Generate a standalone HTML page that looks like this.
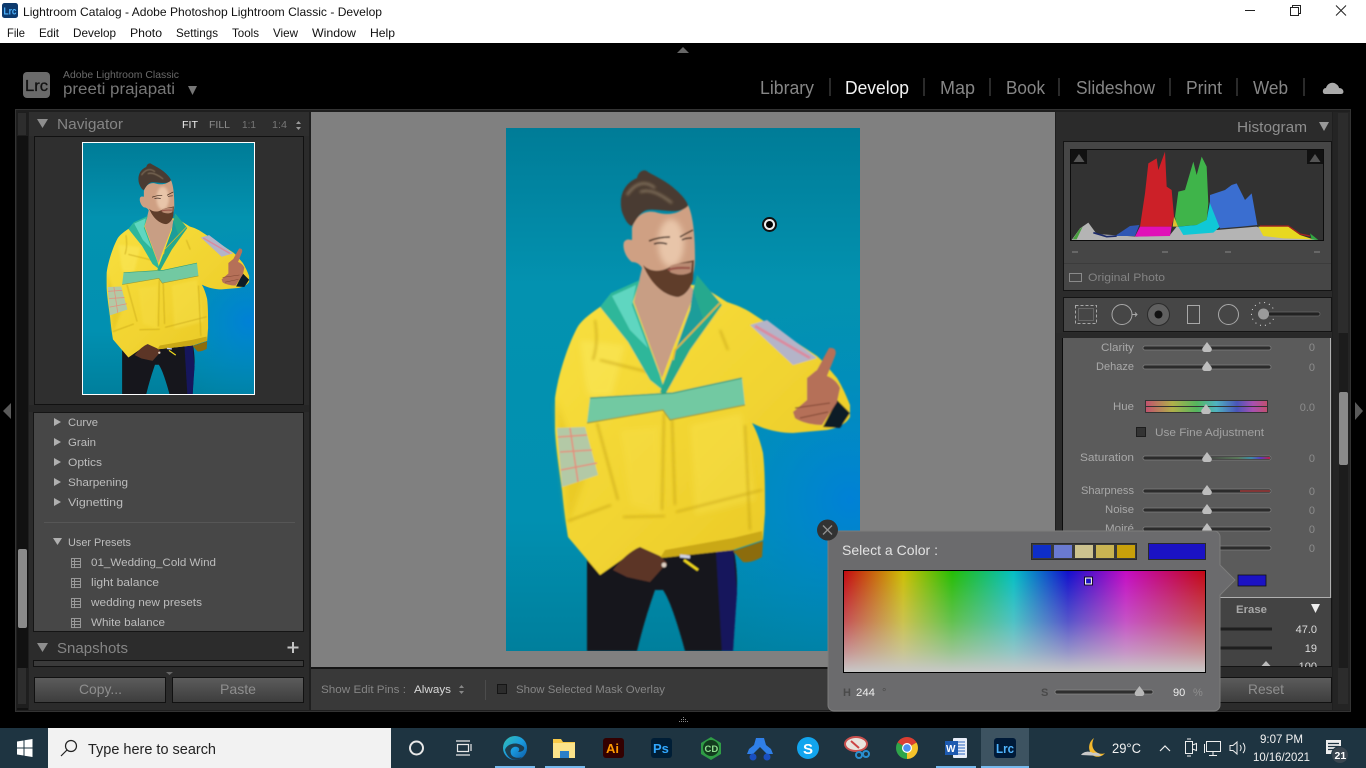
<!DOCTYPE html>
<html lang="en"><head><meta charset="utf-8"><title>Lightroom Catalog - Adobe Photoshop Lightroom Classic - Develop</title>
<style>
html,body{margin:0;padding:0;background:#000;width:1366px;height:768px;overflow:hidden}
svg{display:block;position:absolute;left:0;top:0}
text{font-family:"Liberation Sans",sans-serif;white-space:pre}
</style></head><body>
<svg width="1366" height="768" viewBox="0 0 1366 768" xmlns="http://www.w3.org/2000/svg">
<defs>
<linearGradient id="bgA" x1="0" y1="0" x2="0" y2="1"><stop offset="0" stop-color="#007c97"/><stop offset=".3" stop-color="#0392b0"/><stop offset=".75" stop-color="#0190b1"/><stop offset="1" stop-color="#007f9c"/></linearGradient>
<radialGradient id="bgB" gradientUnits="userSpaceOnUse" cx="850" cy="500" r="210"><stop offset="0" stop-color="#0080d8" stop-opacity=".95"/><stop offset="1" stop-color="#0090c0" stop-opacity="0"/></radialGradient>
<linearGradient id="btn" x1="0" y1="0" x2="0" y2="1"><stop offset="0" stop-color="#5c5c5c"/><stop offset="1" stop-color="#3d3d3d"/></linearGradient>
<linearGradient id="spec" x1="0" y1="0" x2="1" y2="0"><stop offset="0" stop-color="#c40812"/><stop offset=".165" stop-color="#cdbf05"/><stop offset=".3" stop-color="#25bd05"/><stop offset=".47" stop-color="#04bfc4"/><stop offset=".62" stop-color="#1210cc"/><stop offset=".78" stop-color="#c40cc4"/><stop offset="1" stop-color="#c40812"/></linearGradient>
<linearGradient id="specV" x1="0" y1="0" x2="0" y2="1"><stop offset="0" stop-color="#c8c8c8" stop-opacity="0"/><stop offset=".5" stop-color="#c8c8c8" stop-opacity=".38"/><stop offset=".8" stop-color="#c8c8c8" stop-opacity=".72"/><stop offset="1" stop-color="#c8c8c8"/></linearGradient>
<linearGradient id="hue" x1="0" y1="0" x2="1" y2="0"><stop offset="0" stop-color="#c2506e"/><stop offset=".22" stop-color="#b0b04a"/><stop offset=".42" stop-color="#55b55e"/><stop offset=".58" stop-color="#4fb4c0"/><stop offset=".75" stop-color="#4a55b8"/><stop offset=".88" stop-color="#a850b0"/><stop offset="1" stop-color="#c2506e"/></linearGradient>
<linearGradient id="sat" x1="0" y1="0" x2="1" y2="0"><stop offset="0" stop-color="#444"/><stop offset=".5" stop-color="#5a7a5a"/><stop offset=".7" stop-color="#3b8ca8"/><stop offset=".85" stop-color="#5a3ac0"/><stop offset="1" stop-color="#c02040"/></linearGradient>
<linearGradient id="jack" x1="0" y1="0" x2="1" y2="1"><stop offset="0" stop-color="#f8e040"/><stop offset=".55" stop-color="#f1d330"/><stop offset="1" stop-color="#e6c522"/></linearGradient>
<linearGradient id="edge" x1="0" y1="0" x2="1" y2="1"><stop offset="0" stop-color="#35c1b0"/><stop offset=".5" stop-color="#1a9be0"/><stop offset="1" stop-color="#0c59a4"/></linearGradient>
<filter id="soft" x="-5%" y="-5%" width="110%" height="110%"><feGaussianBlur stdDeviation=".7"/></filter>
<filter id="soft3" x="-20%" y="-20%" width="140%" height="140%"><feGaussianBlur stdDeviation="3"/></filter>
<filter id="soft1" x="-20%" y="-20%" width="140%" height="140%"><feGaussianBlur stdDeviation="1.3"/></filter>
<clipPath id="imgClip"><rect x="506" y="128" width="354" height="523"/></clipPath>
<clipPath id="faceClip"><path d="M632 228 C636 215 645 210 655 212 C668 216 680 214 688 205 C693 215 695 235 695 258 C695 275 690 290 678 296 C665 296 650 285 642 268 C640 264 636 262 632 262 C626 258 622 248 624 242 C627 238 630 240 632 240Z"/></clipPath>
<g id="person" clip-path="url(#imgClip)">
<rect x="506" y="128" width="354" height="523" fill="url(#bgA)"/>
<rect x="506" y="128" width="354" height="523" fill="url(#bgB)"/>
<g filter="url(#soft)">
<path d="M587 560 L733 545 C738 570 738 590 735 610 L733 651 L685 651 C678 625 670 600 663 590 L655 590 C648 610 642 630 637 651 L587 651Z" fill="#15171c"/>
<path d="M716 550 L733 548 L737 593 L733 651 L722 651Z" fill="#12145c"/>
<path d="M733 551 L763 541 L762 557 C755 561 748 563 743 562Z" fill="#8c6c10"/>
<!-- jacket -->
<path d="M600 307 C588 315 580 322 577 328 C568 345 558 375 555 398 L555 430 C556 450 560 475 562 490 C564 510 566 525 568 537 L600 575 L640 547 L660 558 L733 550 L763 540 L765 513 C765 490 765 470 763 453 C760 440 756 430 752 423 C765 430 780 433 793 433 L827 430 C838 428 846 424 850 417 L850 405 C846 395 842 386 837 378 C830 370 824 362 817 356 L750 312 C740 306 733 304 727 302 L700 285 L640 285Z" fill="url(#jack)"/>
<path d="M660 558 L733 550 L763 540 L762 531 L733 538 L665 550Z" fill="#caa818"/>
<path d="M556 400 C558 430 562 470 568 525 L585 480Z" fill="#e6c624" opacity=".7" filter="url(#soft3)"/>
<path d="M580 340 C585 380 585 390 590 396 L612 396 L625 345Z" fill="#fbe960" opacity=".5" filter="url(#soft3)"/>
<path d="M690 425 L742 412 L755 500 L695 515Z" fill="#fae654" opacity=".35" filter="url(#soft3)"/>
<path d="M620 430 L660 425 L660 515 L630 505Z" fill="#f8e04c" opacity=".35" filter="url(#soft3)"/>
<g filter="url(#soft1)" fill="none" stroke="#c4a316" stroke-width="1.600" opacity=".85">
<path d="M568 521 L611 505 M623 517 L665 516 M676 512 L762 490 M664 413 L662 510 M672 418 L675 505 M597 423 L618 500 M745 425 L750 530 M600 360 L660 375"/>
<path d="M595 320 C598 340 596 350 593 360 M720 330 L728 350"/>
</g>
<!-- neck chest -->
<path d="M634 302 L642 268 L690 285 L695 292 L673 348 L662 378Z" fill="#c89e84"/>
<!-- collars -->
<path d="M600 307 L611 293 L640 280 L633 302 L660 375 L665 392 L650 380 L628 342Z" fill="#2fb79a"/>
<path d="M612 296 L636 285 L632 305 L648 348 L630 330Z" fill="#5ed6c0"/>
<path d="M697 275 L722 305 L690 350 L665 395 L660 392 L672 360 L690 310 L693 290Z" fill="#27a98e"/>
<path d="M693 290 L703 318 L675 352 L690 310Z" fill="#1f9d9a"/>
<path d="M720 303 L675 350 L673 360" stroke="#e8b820" stroke-width="1.500" fill="none"/>
<!-- head -->
<path d="M632 228 C636 215 645 210 655 212 C668 216 680 214 688 205 C693 215 695 235 695 258 C695 275 690 290 678 296 C665 296 650 285 642 268 C640 264 636 262 632 262 C626 258 622 248 624 242 C627 238 630 240 632 240Z" fill="#cfa083"/>
<g clip-path="url(#faceClip)"><ellipse cx="671" cy="243" rx="13" ry="24" fill="#e8c5a9" filter="url(#soft3)"/></g>
<path d="M643 265 C650 272 660 272 668 268 C678 262 688 262 694 260 L693 280 C690 290 684 296 678 297 C665 296 651 285 643 265Z" fill="#5f3e2a"/>
<path d="M670 266 C678 262 686 264 692 262 L691 272 C684 276 676 275 670 272Z" fill="#b98a72"/>
<path d="M668 270 C676 267 684 268 690 268" stroke="#9a5448" stroke-width="2.200" fill="none"/>
<path d="M649 241 C656 238 664 237 670 237 M680 237 C685 234 689 232 693 230" stroke="#3f2a1c" stroke-width="1.500" fill="none"/>
<path d="M654 244 C659 242 664 243 667 244 M682 240 C685 238 689 238 692 238" stroke="#3c2a24" stroke-width="1.500" fill="none"/>
<path d="M622 212 C618 195 625 183 637 178 C638 172 644 168 648 172 C655 176 668 182 676 190 C683 196 688 203 688 206 C678 216 660 208 647 210 C640 212 636 220 632 226 C628 225 625 220 622 212Z" fill="#4a3b30"/>
<path d="M627 195 C635 183 645 180 655 188 M640 192 C650 188 662 195 672 203" stroke="#84735f" stroke-width="2.200" fill="none" filter="url(#soft1)"/>
<!-- pocket band -->
<path d="M590 398 L673 393 L742 378 L745 405 L670 420 L663 410 L587 423Z" fill="#72c9a2"/>
<path d="M590 398 L673 393 L742 378" stroke="#2f9c78" stroke-width="1.200" fill="none"/>
<path d="M587 423 L663 410 L670 420 L745 405" stroke="#9c9b34" stroke-width="1.200" fill="none"/>
<!-- patches -->
<path d="M557 428 L585 427 L598 475 L562 487Z" fill="#b3c9a6"/>
<path d="M558 437 L587 435 M560 452 L592 450 M561 470 L597 463 M570 428 L578 482" stroke="#e2907e" stroke-width="1.600"/>
<path d="M750 325 L767 320 L817 358 L793 365Z" fill="#b4b4c8"/>
<path d="M755 326 L810 358" stroke="#d98ca0" stroke-width="3"/>
<!-- hands -->
<path d="M837 400 L850 413 L840 428 L823 427Z" fill="#0d1a26"/>
<path d="M829 348 C835 347 837 351 835 356 L827 376 C833 378 838 383 840 388 L837 402 L822 425 C812 425 800 422 795 418 L793 412 L807 400 L807 378 C811 375 814 372 817 370Z" fill="#b57058"/>
<path d="M795 408 L830 403 M800 418 L828 412" stroke="#7d4430" stroke-width="1"/>
<path d="M613 570 C622 558 632 550 640 547 L660 556 L667 563 L650 582 L627 577Z" fill="#5b3526"/>
<path d="M684 560 L698 570" stroke="#f2d91e" stroke-width="2.500"/>
<path d="M680 556 L690 557" stroke="#cfd3e6" stroke-width="3"/>
<circle cx="664" cy="565" r="2.400" fill="#e0d0c4"/>
</g>
</g>
</defs>

<!-- window chrome -->
<rect x="0" y="0" width="1366" height="43" fill="#fff"/>
<rect x="2" y="3" width="16" height="15" rx="2.500" fill="#0d3a6e"/>
<text x="3.500" y="14.500" font-size="10" font-weight="700" fill="#4fb5ff" textLength="13" lengthAdjust="spacingAndGlyphs">Lrc</text>
<text x="23" y="16" font-size="12" fill="#111" textLength="359" lengthAdjust="spacingAndGlyphs">Lightroom Catalog - Adobe Photoshop Lightroom Classic - Develop</text>
<g font-size="12" fill="#111">
<text x="7" y="37" textLength="18" lengthAdjust="spacingAndGlyphs">File</text>
<text x="39" y="37" textLength="20" lengthAdjust="spacingAndGlyphs">Edit</text>
<text x="73" y="37" textLength="43" lengthAdjust="spacingAndGlyphs">Develop</text>
<text x="130" y="37" textLength="32" lengthAdjust="spacingAndGlyphs">Photo</text>
<text x="176" y="37" textLength="42" lengthAdjust="spacingAndGlyphs">Settings</text>
<text x="232" y="37" textLength="27" lengthAdjust="spacingAndGlyphs">Tools</text>
<text x="273" y="37" textLength="25" lengthAdjust="spacingAndGlyphs">View</text>
<text x="312" y="37" textLength="44" lengthAdjust="spacingAndGlyphs">Window</text>
<text x="370" y="37" textLength="25" lengthAdjust="spacingAndGlyphs">Help</text>
</g>
<path d="M1245 10.500H1255" stroke="#222" stroke-width="1"/>
<path d="M1290.500 7.500h8v8h-8z M1292.500 7.500v-2h8v8h-2" fill="none" stroke="#222"/>
<path d="M1336 5.500l10 10M1346 5.500l-10 10" stroke="#222" stroke-width="1"/>

<!-- top bar -->
<path d="M677 53L683 47L689 53Z" fill="#666"/>
<rect x="23" y="72" width="27" height="26" rx="4" fill="#6a6a6a"/>
<text x="25" y="91" font-size="16" fill="#111" stroke="#111" stroke-width=".3" textLength="23" lengthAdjust="spacingAndGlyphs">Lrc</text>
<text x="63" y="78" font-size="10.500" fill="#6a6a6a" textLength="116" lengthAdjust="spacingAndGlyphs">Adobe Lightroom Classic</text>
<text x="63" y="94" font-size="15.500" fill="#777" textLength="112" lengthAdjust="spacingAndGlyphs">preeti prajapati</text>
<path d="M188 86h9l-4.500 9z" fill="#767676"/>
<g font-size="18" fill="#868686">
<text x="760" y="94" textLength="54" lengthAdjust="spacingAndGlyphs">Library</text>
<text x="845" y="94" fill="#f4f4f4" textLength="64" lengthAdjust="spacingAndGlyphs">Develop</text>
<text x="940" y="94" textLength="35" lengthAdjust="spacingAndGlyphs">Map</text>
<text x="1006" y="94" textLength="39" lengthAdjust="spacingAndGlyphs">Book</text>
<text x="1076" y="94" textLength="79" lengthAdjust="spacingAndGlyphs">Slideshow</text>
<text x="1186" y="94" textLength="36" lengthAdjust="spacingAndGlyphs">Print</text>
<text x="1253" y="94" textLength="35" lengthAdjust="spacingAndGlyphs">Web</text>
</g>
<path d="M830 78v18M924 78v18M990 78v18M1059 78v18M1170 78v18M1237 78v18M1304 78v18" stroke="#555" stroke-width="1"/>
<path d="M1325 94c-3 0-3-6 1-6 1-4 6-7 10-4 2 1 3 3 3 4 5 0 6 6 2 6z" fill="#aaa"/>

<!-- frame -->
<rect x="15.500" y="109.500" width="1335" height="602" fill="#1f1f1f" stroke="#333"/>

<!-- left strip & panel -->
<rect x="17" y="112" width="11" height="598" fill="#111"/>
<rect x="17" y="112" width="11" height="24" fill="#1e1e1e"/><rect x="17" y="668" width="11" height="40" fill="#1e1e1e"/>
<path d="M19 113v22M21 113v22M23 113v22M25 113v22M19 668v36M21 668v36M23 668v36M25 668v36" stroke="#3c3c3c" stroke-width="1"/>
<rect x="18" y="549" width="9" height="79" rx="2" fill="#8a8a8a"/>
<path d="M3 411l8-8v16z" fill="#5a5a5a"/>
<rect x="29" y="112" width="280" height="598" fill="#2b2b2b"/>
<!-- navigator -->
<rect x="29" y="112" width="280" height="24" fill="#2e2e2e"/>
<path d="M37 119h11l-5.500 9z" fill="#8e8e8e"/>
<text x="57" y="129" font-size="15" fill="#858585" textLength="66" lengthAdjust="spacingAndGlyphs">Navigator</text>
<g font-size="10">
<text x="182" y="128" fill="#eee" textLength="16" lengthAdjust="spacingAndGlyphs">FIT</text>
<text x="209" y="128" fill="#8c8c8c" textLength="21" lengthAdjust="spacingAndGlyphs">FILL</text>
<text x="242" y="128" fill="#777" textLength="14" lengthAdjust="spacingAndGlyphs">1:1</text>
<text x="272" y="128" fill="#777" textLength="15" lengthAdjust="spacingAndGlyphs">1:4</text>
</g>
<path d="M296 124l2.500-3 2.500 3zM296 127l2.500 3 2.500-3z" fill="#999"/>
<rect x="34.500" y="136.500" width="269" height="268" fill="#2f2f2f" stroke="#111"/>
<rect x="82.500" y="142.500" width="172" height="252" fill="none" stroke="#fff"/>
<use href="#person" transform="translate(83 143) scale(.483 .48) translate(-506 -128)"/>
<rect x="29" y="405" width="280" height="7" fill="#262626"/>
<!-- presets -->
<rect x="33.500" y="412.500" width="270" height="219" fill="#474747" stroke="#151515"/>
<g fill="#b0b0b0"><path d="M54 418v8l7-4zM54 438v8l7-4zM54 458v8l7-4zM54 478v8l7-4zM54 498v8l7-4z"/><path d="M53 538h9l-4.500 7z"/></g>
<g font-size="11" fill="#bdbdbd">
<text x="68" y="426" textLength="30" lengthAdjust="spacingAndGlyphs">Curve</text>
<text x="68" y="446" textLength="28" lengthAdjust="spacingAndGlyphs">Grain</text>
<text x="68" y="466" textLength="34" lengthAdjust="spacingAndGlyphs">Optics</text>
<text x="68" y="486" textLength="60" lengthAdjust="spacingAndGlyphs">Sharpening</text>
<text x="68" y="506" textLength="55" lengthAdjust="spacingAndGlyphs">Vignetting</text>
<text x="68" y="546" textLength="63" lengthAdjust="spacingAndGlyphs">User Presets</text>
<text x="91" y="566" textLength="125" lengthAdjust="spacingAndGlyphs">01_Wedding_Cold Wind</text>
<text x="91" y="586" textLength="68" lengthAdjust="spacingAndGlyphs">light balance</text>
<text x="91" y="606" textLength="111" lengthAdjust="spacingAndGlyphs">wedding new presets</text>
<text x="91" y="626" textLength="74" lengthAdjust="spacingAndGlyphs">White balance</text>
</g>
<path d="M44 522.500H295" stroke="#565656"/>
<g fill="none" stroke="#999" stroke-width="1">
<path d="M71.500 558.500h9v9h-9zM71.500 561.500h9M71.500 564.500h9M74.500 558.500v9"/>
<path d="M71.500 578.500h9v9h-9zM71.500 581.500h9M71.500 584.500h9M74.500 578.500v9"/>
<path d="M71.500 598.500h9v9h-9zM71.500 601.500h9M71.500 604.500h9M74.500 598.500v9"/>
<path d="M71.500 618.500h9v9h-9zM71.500 621.500h9M71.500 624.500h9M74.500 618.500v9"/>
</g>
<!-- snapshots -->
<rect x="30" y="632" width="279" height="28" fill="#2c2c2c"/>
<path d="M37 643h11l-5.500 9z" fill="#8e8e8e"/>
<text x="57" y="653" font-size="15" fill="#858585" textLength="71" lengthAdjust="spacingAndGlyphs">Snapshots</text>
<path d="M293 642v11M287.500 647.500h11" stroke="#c4c4c4" stroke-width="2"/>
<rect x="33.500" y="660.500" width="270" height="6" fill="#3a3a3a" stroke="#111"/>
<path d="M166 672h7l-3.500 3z" fill="#666"/>
<rect x="34.500" y="677.500" width="131" height="25" fill="url(#btn)" stroke="#111"/>
<rect x="172.500" y="677.500" width="131" height="25" fill="url(#btn)" stroke="#111"/>
<text x="79" y="694" font-size="14" fill="#8e8e8e" textLength="43" lengthAdjust="spacingAndGlyphs">Copy...</text>
<text x="220" y="694" font-size="14" fill="#8e8e8e" textLength="36" lengthAdjust="spacingAndGlyphs">Paste</text>

<!-- center -->
<rect x="311" y="112" width="744" height="555" fill="#808080"/>
<use href="#person"/>
<circle cx="769.500" cy="224.500" r="7.500" fill="#111"/>
<circle cx="769.500" cy="224.500" r="5.500" fill="#eee"/>
<circle cx="769.500" cy="224.500" r="3.500" fill="#000"/>
<rect x="311" y="667" width="744" height="2" fill="#151515"/>
<rect x="311" y="669" width="744" height="41" fill="#393939"/>
<text x="321" y="693" font-size="11" fill="#858585" textLength="85" lengthAdjust="spacingAndGlyphs">Show Edit Pins :</text>
<text x="414" y="693" font-size="11" fill="#d8d8d8" textLength="37" lengthAdjust="spacingAndGlyphs">Always</text>
<path d="M459 688l2.500-3 2.500 3zM459 691l2.500 3 2.500-3z" fill="#888"/>
<path d="M485.500 680v20" stroke="#4c4c4c"/>
<rect x="497.500" y="684.500" width="9" height="9" fill="#2c2c2c" stroke="#151515"/>
<text x="516" y="693" font-size="11" fill="#858585" textLength="149" lengthAdjust="spacingAndGlyphs">Show Selected Mask Overlay</text>

<!-- right panel -->
<rect x="1056" y="112" width="276" height="598" fill="#2b2b2b"/>
<text x="1237" y="132" font-size="15" fill="#8e8e8e" textLength="70" lengthAdjust="spacingAndGlyphs">Histogram</text>
<path d="M1319 122h10l-5 9z" fill="#999"/>
<rect x="1063.500" y="141.500" width="268" height="149" fill="#464646" stroke="#141414"/>
<rect x="1070.500" y="149.500" width="253" height="91" fill="#323232" stroke="#0c0c0c"/>
<svg x="1050" y="110" width="316" height="240" viewBox="0 0 948 720">
<path d="M65 390L90 355L115 338L140 372L260 380L360 375L380 350L500 360L620 350L700 380L805 390Z" fill="#b4b4b4"/>
<path d="M195 378L240 348L268 345L255 378Z" fill="#2f57b4"/>
<path d="M130 368L170 380L200 378" stroke="#1c2a6a" stroke-width="5" fill="none"/>
<path d="M270 350L285 250L295 160L320 145L325 180L345 125L350 230L365 240L372 320L365 350Z" fill="#cc2028"/>
<path d="M255 380L270 350L365 350L360 378Z" fill="#e010b8"/>
<path d="M375 320L385 245L405 240L430 155L440 195L455 140L470 170L475 280L470 335L440 345L380 350Z" fill="#3fb44a"/>
<path d="M385 350L440 345L470 330L480 275L510 350L490 368L400 375Z" fill="#10c8d6"/>
<path d="M480 255L525 240L545 225L560 220L585 270L605 250L622 345L575 350L510 355L480 280Z" fill="#3a6ed0"/>
<path d="M372 320L384 350L368 350Z" fill="#e0c030"/>
<path d="M625 350L715 350L750 375L790 388L700 385L640 378Z" fill="#e8d820"/>
<path d="M630 348L715 348L750 372L780 378" stroke="#a82020" stroke-width="4" fill="none"/>
<path d="M780 370L805 390L785 388Z" fill="#30a840"/>
<path d="M68 388L88 358L98 350L80 388Z" fill="#4aa040"/>
</svg>
<rect x="1071" y="150" width="16" height="14" fill="#111"/><path d="M1073.500 162l5.500-8 5.500 8z" fill="#555"/>
<rect x="1307" y="150" width="16" height="14" fill="#111"/><path d="M1309.500 162l5.500-8 5.500 8z" fill="#555"/>
<path d="M1072 252h6M1162 252h6M1225 252h6M1314 252h6" stroke="#888"/>
<path d="M1064 263.500h267" stroke="#3c3c3c"/>
<rect x="1069.500" y="273.500" width="12" height="8" fill="none" stroke="#8a8a8a"/>
<text x="1088" y="281" font-size="11" fill="#838383" textLength="77" lengthAdjust="spacingAndGlyphs">Original Photo</text>
<rect x="1063.500" y="297.500" width="268" height="34" fill="#464646" stroke="#141414"/>
<g fill="none" stroke="#a8a8a8">
<rect x="1075.500" y="305.500" width="21" height="18" stroke-dasharray="3 2"/>
<rect x="1078.500" y="308.500" width="15" height="12" stroke="#888" stroke-dasharray="1 1"/>
<circle cx="1122" cy="314.500" r="10"/><path d="M1132 314.500h5M1135 312.500l2 2-2 2"/>
<rect x="1187.500" y="305.500" width="12" height="18"/>
<circle cx="1228.500" cy="314.500" r="10"/>
<circle cx="1263" cy="314" r="11.500" stroke-dasharray="1 4" stroke="#ddd"/>
</g>
<circle cx="1158.500" cy="314.500" r="11" fill="#606060" stroke="#2b2b2b"/><circle cx="1158.500" cy="314.500" r="4" fill="#111"/>
<rect x="1268" y="312" width="52" height="4" rx="2" fill="#222" stroke="#666" stroke-width=".8"/>
<circle cx="1263.500" cy="314" r="5.500" fill="#9a9a9a"/>

<rect x="1056" y="333" width="276" height="7" fill="#292929"/>
<rect x="1062" y="338" width="269" height="259" fill="#5b5b5b"/>
<path d="M1062.500 338v260" stroke="#0c0c0c"/>
<path d="M1330.500 338v260M1063 597.500h268" stroke="#b0b0b0"/>

<g font-size="11" fill="#a8a8a8" text-anchor="end">
<text x="1134" y="351" textLength="33" lengthAdjust="spacingAndGlyphs">Clarity</text>
<text x="1134" y="370" textLength="38" lengthAdjust="spacingAndGlyphs">Dehaze</text>
<text x="1134" y="410" textLength="21" lengthAdjust="spacingAndGlyphs">Hue</text>
<text x="1134" y="461" textLength="54" lengthAdjust="spacingAndGlyphs">Saturation</text>
<text x="1134" y="494" textLength="53" lengthAdjust="spacingAndGlyphs">Sharpness</text>
<text x="1134" y="513" textLength="29" lengthAdjust="spacingAndGlyphs">Noise</text>
<text x="1134" y="532" textLength="29" lengthAdjust="spacingAndGlyphs">Moiré</text>
</g>
<g font-size="11" fill="#8c8c8c" text-anchor="end">
<text x="1315" y="351">0</text><text x="1315" y="371">0</text><text x="1315" y="411">0.0</text><text x="1315" y="462">0</text><text x="1315" y="495">0</text><text x="1315" y="514">0</text><text x="1315" y="533">0</text><text x="1315" y="552">0</text>
</g>
<g fill="#2b2b2b" stroke="#808080" stroke-width=".8">
<rect x="1143" y="346" width="128" height="4" rx="2"/>
<rect x="1143" y="365" width="128" height="4" rx="2"/>
<rect x="1143" y="456" width="128" height="4" rx="2"/>
<rect x="1143" y="489" width="128" height="4" rx="2"/>
<rect x="1143" y="508" width="128" height="4" rx="2"/>
<rect x="1143" y="527" width="128" height="4" rx="2"/>
<rect x="1143" y="546" width="128" height="4" rx="2"/>
</g>
<rect x="1207" y="457" width="63" height="2" fill="url(#sat)"/>
<path d="M1240 491h30" stroke="#a03a3a" stroke-width="1.500"/>
<rect x="1145.500" y="400.500" width="122" height="12" fill="url(#hue)" stroke="#333"/>
<path d="M1146 406.500h121" stroke="#333"/>
<g fill="#bdbdbd">
<path d="M1207 342l4.500 6c1 2-.5 4-2 4h-5c-1.500 0-3-2-2-4z"/>
<path d="M1207 361l4.500 6c1 2-.5 4-2 4h-5c-1.500 0-3-2-2-4z"/>
<path d="M1206 404l4.500 6c1 2-.5 4-2 4h-5c-1.500 0-3-2-2-4z"/>
<path d="M1207 452l4.500 6c1 2-.5 4-2 4h-5c-1.500 0-3-2-2-4z"/>
<path d="M1207 485l4.500 6c1 2-.5 4-2 4h-5c-1.500 0-3-2-2-4z"/>
<path d="M1207 504l4.500 6c1 2-.5 4-2 4h-5c-1.500 0-3-2-2-4z"/>
<path d="M1207 523l4.500 6c1 2-.5 4-2 4h-5c-1.500 0-3-2-2-4z"/>
</g>
<rect x="1136.500" y="427.500" width="9" height="9" fill="#333" stroke="#1d1d1d"/>
<text x="1155" y="436" font-size="11" fill="#a2a2a2" textLength="109" lengthAdjust="spacingAndGlyphs">Use Fine Adjustment</text>

<rect x="1062" y="598" width="269" height="68" fill="#434343"/>
<path d="M1062.500 598v68M1331.500 598v68M1062 666.500h270" stroke="#141414"/>
<text x="1236" y="613" font-size="11" font-weight="700" fill="#a8a8a8" textLength="31" lengthAdjust="spacingAndGlyphs">Erase</text>
<path d="M1311 604h9l-4.500 9z" fill="#eee"/>
<path d="M1150 629h122M1150 648h122" stroke="#1e1e1e" stroke-width="3"/>
<text x="1317" y="633" font-size="11" fill="#dcdcdc" text-anchor="end">47.0</text>
<text x="1317" y="652" font-size="11" fill="#dcdcdc" text-anchor="end">19</text>
<path d="M1266 661l4.500 5h-9z" fill="#bbb"/>
<text x="1317" y="670" font-size="11" fill="#dcdcdc" text-anchor="end">100</text>
<rect x="1056" y="667" width="276" height="43" fill="#2b2b2b"/>
<rect x="1200.500" y="677.500" width="131" height="25" fill="url(#btn)" stroke="#111"/>
<text x="1248" y="694" font-size="14" fill="#8e8e8e" textLength="36" lengthAdjust="spacingAndGlyphs">Reset</text>

<!-- right strip -->
<rect x="1333" y="112" width="17" height="598" fill="#242424"/>
<path d="M1339 113v220M1341 113v220M1343 113v220M1345 113v220M1347 113v220M1339 668v36M1341 668v36M1343 668v36M1345 668v36M1347 668v36" stroke="#333"/>
<rect x="1339" y="333" width="9" height="335" fill="#1c1c1c"/>
<rect x="1339" y="392" width="9" height="73" rx="2" fill="#8a8a8a"/>
<rect x="1351" y="110" width="15" height="602" fill="#000"/>
<path d="M1355 402l8 9-8 9z" fill="#5a5a5a"/>

<!-- color popup -->
<path d="M834 531H1214a6 6 0 0 1 6 6V565L1235 580L1220 595V705a6 6 0 0 1-6 6H834a6 6 0 0 1-6-6V537a6 6 0 0 1 6-6Z" fill="#6b6b6d" stroke="#7c7c7c"/>
<rect x="1238" y="575" width="28" height="11" fill="#1b12c4" stroke="#111" stroke-width=".8"/>
<circle cx="827.500" cy="530" r="10.500" fill="#323232"/>
<path d="M823 525.500l9 9M832 525.500l-9 9" stroke="#909090" stroke-width="1.300"/>
<text x="842" y="555" font-size="14" fill="#e2e2e2" textLength="96" lengthAdjust="spacingAndGlyphs">Select a Color :</text>
<rect x="1031.500" y="543.500" width="105" height="16" fill="#3a3a3a" stroke="#2a2a2a"/>
<rect x="1033" y="545" width="18" height="13" fill="#0e2ec8"/>
<rect x="1054" y="545" width="18" height="13" fill="#6a7ad0"/>
<rect x="1075" y="545" width="18" height="13" fill="#ccc28e"/>
<rect x="1096" y="545" width="18" height="13" fill="#c9b452"/>
<rect x="1117" y="545" width="18" height="13" fill="#c8a00a"/>
<rect x="1148.500" y="543.500" width="57" height="16" fill="#1b12c4" stroke="#2a2a2a"/>
<rect x="843.500" y="570.500" width="362" height="102" fill="url(#spec)" stroke="#000"/>
<rect x="844" y="571" width="361" height="101" fill="url(#specV)"/>
<rect x="1085.500" y="578" width="6" height="6" fill="#1b12c4" stroke="#eee" stroke-width="1.200"/>
<rect x="1084.500" y="577" width="8" height="8" fill="none" stroke="#000" stroke-width=".8"/>
<text x="843" y="696" font-size="11" fill="#4a4a4a" font-weight="700">H</text>
<text x="856" y="696" font-size="11" fill="#eee" textLength="19" lengthAdjust="spacingAndGlyphs">244</text>
<text x="882" y="696" font-size="11" fill="#4a4a4a">°</text>
<text x="1041" y="696" font-size="11" fill="#4a4a4a" font-weight="700">S</text>
<rect x="1055" y="690" width="98" height="4" rx="2" fill="#2e2e2e" stroke="#888" stroke-width=".8"/>
<path d="M1139.500 686l4.500 6c1 2-.5 4-2 4h-5c-1.500 0-3-2-2-4z" fill="#b8b8b8"/>
<text x="1173" y="696" font-size="11" fill="#eee">90</text>
<text x="1193" y="696" font-size="11" fill="#8e8e8e">%</text>

<!-- bottom black -->
<rect x="0" y="712" width="1366" height="16" fill="#000"/>
<g fill="#8a8a8a"><rect x="683" y="717" width="1" height="1"/><rect x="681" y="719" width="1" height="1"/><rect x="683" y="719" width="1" height="1"/><rect x="685" y="719" width="1" height="1"/><rect x="679" y="721" width="1" height="1"/><rect x="681" y="721" width="1" height="1"/><rect x="683" y="721" width="1" height="1"/><rect x="685" y="721" width="1" height="1"/><rect x="687" y="721" width="1" height="1"/></g>

<!-- taskbar -->
<rect x="0" y="728" width="1366" height="40" fill="#1e3441"/>
<path d="M17 741.500l6.500-1v7H17zM24.500 740.300l8-1.300v8.500h-8zM17 748.500h6.500v7L17 754.500zM24.500 748.500h8V757l-8-1.300z" fill="#fff"/>
<rect x="48" y="728" width="343" height="40" fill="#f2f2f2"/>
<circle cx="71" cy="746" r="5.500" fill="none" stroke="#222" stroke-width="1.200"/><path d="M67 750l-6 6" stroke="#222" stroke-width="1.200"/>
<text x="88" y="754" font-size="14.500" fill="#222" textLength="128" lengthAdjust="spacingAndGlyphs">Type here to search</text>
<circle cx="416.500" cy="748" r="6.500" fill="none" stroke="#e8e8e8" stroke-width="2"/>
<path d="M456 741h14M456 755h14M457.500 744.500h11v7h-11zM471 744v7" fill="none" stroke="#e8e8e8" stroke-width="1.200"/>
<rect x="495" y="766" width="40" height="2" fill="#76b9ed"/>
<rect x="545" y="766" width="40" height="2" fill="#76b9ed"/>
<rect x="936" y="766" width="40" height="2" fill="#76b9ed"/>
<rect x="981" y="728" width="48" height="40" fill="#3d5361"/>
<rect x="981" y="766" width="48" height="2" fill="#76b9ed"/>
<!-- edge -->
<circle cx="515" cy="748" r="12" fill="url(#edge)"/>
<path d="M505 750c2-7 13-9 19-3 1 3-2 5-6 5 3-3 0-6-4-5-3 1-4 4-3 7 1 3 6 5 11 3-4 5-14 4-17-7z" fill="#1e3441" opacity=".9"/>
<!-- folder -->
<path d="M553 739h8l2 3h12v16h-22z" fill="#f7c948"/>
<rect x="553" y="743" width="22" height="15" fill="#fbe38a"/>
<rect x="560" y="751" width="9" height="7" fill="#2b7fc9"/>
<!-- Ai -->
<rect x="603" y="738" width="21" height="20" rx="3" fill="#330000"/>
<text x="606" y="753" font-size="13" font-weight="700" fill="#ff9a00">Ai</text>
<!-- Ps -->
<rect x="651" y="738" width="21" height="20" rx="3" fill="#001e36"/>
<text x="653" y="753" font-size="13" font-weight="700" fill="#31a8ff">Ps</text>
<!-- CD -->
<path d="M711 737l10 6v11l-10 6-10-6v-11z" fill="#2f9c45"/>
<circle cx="711" cy="748" r="8" fill="#123b1e"/>
<text x="704.500" y="752" font-size="9.500" font-weight="700" fill="#8fe08f">CD</text>
<!-- blue -->
<path d="M756 738h8l2 7 5 4 2 5h-6l-7-7-7 7h-6l2-5 5-4z" fill="#2f7fe8"/>
<circle cx="753" cy="757" r="3.500" fill="#1a4fc0"/><circle cx="767" cy="757" r="3.500" fill="#1a4fc0"/>
<!-- skype -->
<circle cx="808" cy="748" r="11" fill="#12a5ee"/>
<text x="803" y="754" font-size="15" font-weight="700" fill="#fff">S</text>
<!-- snip -->
<ellipse cx="856" cy="744" rx="11" ry="7" fill="#e8e4de" stroke="#c8504e" stroke-width="2"/>
<path d="M851 741l8 7" stroke="#c44" stroke-width="2"/>
<circle cx="859" cy="755" r="3" fill="none" stroke="#2a8fd0" stroke-width="2"/><circle cx="866" cy="754" r="3" fill="none" stroke="#2a8fd0" stroke-width="2"/>
<!-- chrome -->
<path d="M907 748L897.500 742.500A11 11 0 0 1 916.500 742.500Z" fill="#db3e32"/>
<path d="M907 748L916.500 742.500A11 11 0 0 1 907 759Z" fill="#f6c32a"/>
<path d="M907 748L907 759A11 11 0 0 1 897.500 742.500Z" fill="#2fa54a"/>
<circle cx="907" cy="748" r="5" fill="#fff"/><circle cx="907" cy="748" r="3.800" fill="#4d8ff0"/>
<!-- word -->
<rect x="953" y="738" width="14" height="20" rx="1" fill="#e8eef8"/>
<path d="M955 742h10M955 745h10M955 748h10M955 751h10M955 754h10" stroke="#2b66c0"/>
<rect x="945" y="741" width="13" height="14" fill="#1d5ab0"/>
<text x="946" y="752" font-size="10" font-weight="700" fill="#fff">W</text>
<!-- Lrc -->
<rect x="994" y="738" width="22" height="20" rx="3" fill="#001a38"/>
<text x="996" y="753" font-size="12.500" font-weight="700" fill="#4fb5ff" textLength="18" lengthAdjust="spacingAndGlyphs">Lrc</text>
<!-- tray -->
<path d="M1094 738c-3 6-2 12 4 15 3 1 5 1 7 0-2 3-7 5-11 3-6-3-7-13 0-18z" fill="#f4b82c"/>
<path d="M1081 755c3-4 9-4 12-2 3-1 7 0 8 3z" fill="#c8c8c8"/>
<text x="1112" y="753" font-size="13.500" fill="#f2f2f2" textLength="29" lengthAdjust="spacingAndGlyphs">29°C</text>
<path d="M1160 751l5-5 5 5" fill="none" stroke="#eee" stroke-width="1.200"/>
<path d="M1185.500 741.500h7v12h-7zM1192.500 745l4-1.500v7l-4-1.500zM1187 739h4M1187 756h4" fill="none" stroke="#eee"/>
<path d="M1206.500 741.500h14v10h-14zM1213 751.500v4M1209 755.500h8M1204.500 744v9" fill="none" stroke="#eee"/>
<path d="M1230 745.500h3l4-3.500v12l-4-3.500h-3z M1240 745c1.500 2 1.500 4 0 6 M1243 743c2.500 3 2.500 7 0 10" fill="none" stroke="#eee"/>
<text x="1260" y="743" font-size="12" fill="#f2f2f2" textLength="43" lengthAdjust="spacingAndGlyphs">9:07 PM</text>
<text x="1253" y="761" font-size="12" fill="#f2f2f2" textLength="57" lengthAdjust="spacingAndGlyphs">10/16/2021</text>
<path d="M1326 740h15v14h-15z" fill="#eee"/>
<path d="M1328 743.500h11M1328 746.500h11M1328 749.500h7" stroke="#1e3441" stroke-width="1.200"/>
<circle cx="1340" cy="755" r="8.500" fill="#3a4650" stroke="#1e3441"/>
<text x="1334.500" y="759" font-size="10.500" font-weight="700" fill="#fff">21</text>
</svg>
</body></html>
